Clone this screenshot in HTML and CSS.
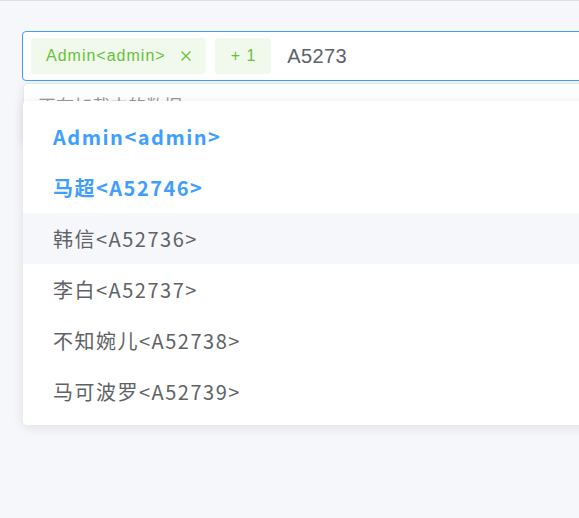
FILE: index.html
```html
<!DOCTYPE html>
<html lang="zh">
<head>
<meta charset="utf-8">
<link rel="stylesheet" href="styles.css">
</head>
<body>
<div class="page">
  <div class="select">
    <div class="input">
      <span class="tag">Admin&lt;admin&gt;<svg class="close" viewBox="0 0 12 12" width="12" height="12"><path d="M1.5 1.5 L10.5 10.5 M10.5 1.5 L1.5 10.5" stroke="#67c23a" stroke-width="1.3" fill="none"/></svg></span>
      <span class="tag tag-more">+ 1</span>
      <span class="query">A5273</span>
    </div>
    <div class="popper-back">
      <span class="empty">正在加载中的数据</span>
    </div>
    <ul class="dropdown">
      <li class="item selected">Admin&lt;admin&gt;</li>
      <li class="item selected">马超&lt;A52746&gt;</li>
      <li class="item hover">韩信&lt;A52736&gt;</li>
      <li class="item">李白&lt;A52737&gt;</li>
      <li class="item">不知婉儿&lt;A52738&gt;</li>
      <li class="item">马可波罗&lt;A52739&gt;</li>
    </ul>
  </div>
</div>
</body>
</html>
```
FILE: styles.css
```css
html, body {
  margin: 0;
  padding: 0;
  overflow: hidden;
  background: #f5f7fa;
  width: 579px;
  height: 518px;
}
.page {
  border-top: 1px solid #dcdfe6;
  padding: 30px 0 0 22px;
  font-family: "Noto Sans CJK SC", "Noto Sans", sans-serif;
}
.select {
  position: relative;
  width: 640px;
}
.input {
  box-sizing: border-box;
  height: 50px;
  border: 1px solid #409eff;
  border-radius: 4px;
  background: #fff;
  display: flex;
  align-items: center;
  padding: 0 8px;
  gap: 9px;
}
.tag {
  box-sizing: border-box;
  height: 36px;
  display: inline-flex;
  align-items: center;
  background: #f0f9eb;
  color: #67c23a;
  border-radius: 4px;
  padding: 0 14px 0 15px;
  font-family: "Liberation Sans", Arial, sans-serif;
  font-size: 16px;
  letter-spacing: 1px;
}
.close {
  margin-left: 14px;
}
.tag-more {
  padding: 0 15px 0 16px;
}
.query {
  margin-left: 7px;
  color: #606266;
  font-family: "Liberation Sans", Arial, sans-serif;
  font-size: 20px;
  letter-spacing: 0.4px;
}
.popper-back {
  position: absolute;
  left: 1px;
  top: 52px;
  right: 0;
  height: 60px;
  background: #fff;
  border: 1px solid #e4e7ed;
  border-radius: 4px;
  box-shadow: 0 2px 12px rgba(0,0,0,0.08);
  padding: 8px 14px;
  box-sizing: border-box;
  color: #999;
  font-size: 18px;
}
.dropdown {
  position: absolute;
  left: 1px;
  top: 70px;
  right: 0;
  margin: 0;
  padding: 10px 0 8px;
  list-style: none;
  background: #fff;
  border-radius: 4px;
  box-shadow: 0 2px 12px rgba(0,0,0,0.1);
}
.item {
  height: 51px;
  line-height: 51px;
  padding-left: 30px;
  font-size: 20px;
  letter-spacing: 1.5px;
  color: #606266;
}
.item.selected {
  color: #409eff;
  font-weight: bold;
}
.item.hover {
  background: #f5f7fa;
}
```
